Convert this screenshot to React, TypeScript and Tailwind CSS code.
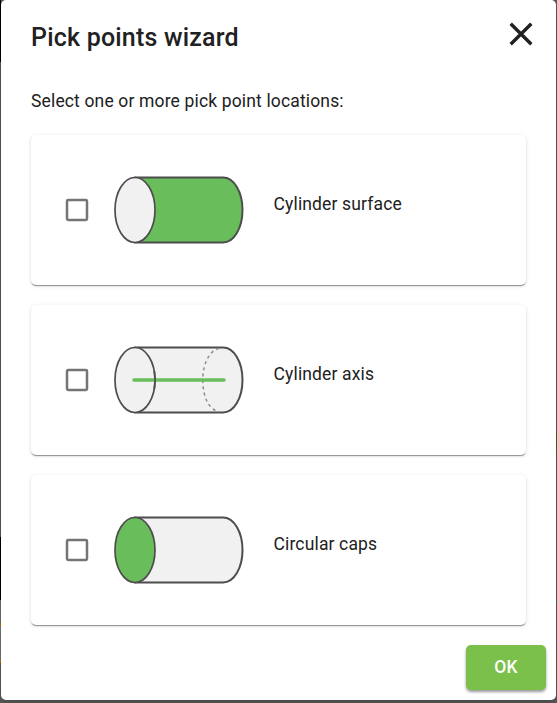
import { useState } from "react";

type Kind = "surface" | "axis" | "caps";

const GREEN = "#69be5b";
const GREY = "#f1f1f1";
const LINE = "#4d4d4d";

function Cylinder({ kind }: { kind: Kind }) {
  return (
    <svg width="132" height="70" viewBox="0 0 132 70" fill="none" className="shrink-0">
      <path
        d="M22 2.5H110C121 2.5 129.5 17 129.5 35S121 67.5 110 67.5H22Z"
        fill={kind === "surface" ? GREEN : GREY}
        stroke={LINE}
        strokeWidth="2"
      />
      <ellipse
        cx="22"
        cy="35"
        rx="20"
        ry="32.5"
        fill={kind === "caps" ? GREEN : GREY}
        stroke={LINE}
        strokeWidth="1.7"
      />
      {kind === "axis" && (
        <>
          <path d="M106 3.6C97 5 89.8 18 89.8 35S96 65 106 66.6" stroke="#8c8c8c" strokeWidth="1.5" strokeDasharray="3 3.3" />
          <path d="M21 35H111" stroke={GREEN} strokeWidth="3.6" strokeLinecap="round" />
          <path d="M41.3 26A20 32.5 0 0 1 41.3 44" stroke={LINE} strokeWidth="1.7" />
        </>
      )}
    </svg>
  );
}

function Option({ kind, label }: { kind: Kind; label: string }) {
  const [checked, setChecked] = useState(false);
  return (
    <label className="flex h-[150px] w-[495px] items-center rounded-[5px] bg-white pl-[34px] shadow-[0_2px_1px_-1px_rgba(0,0,0,0.28),0_1px_1px_0_rgba(0,0,0,0.16),0_1px_4px_0_rgba(0,0,0,0.12)]">
      <input type="checkbox" checked={checked} onChange={() => setChecked(!checked)} className="sr-only" />
      <svg width="24" height="24" viewBox="0 0 24 24" className="shrink-0">
        <rect
          x="2"
          y="2"
          width="20"
          height="20"
          rx="1.2"
          fill={checked ? "#7bc04b" : "none"}
          stroke="#757575"
          strokeWidth="2.5"
        />
      </svg>
      <span className="ml-[23.5px] flex">
        <Cylinder kind={kind} />
      </span>
      <span className="mb-3 ml-[29px] text-[17.5px] leading-6 tracking-[0.15px]">{label}</span>
    </label>
  );
}

export default function App() {
  return (
    <div className="flex h-[703px] w-[557px] overflow-hidden bg-[#5c5c5c] font-['Roboto','Liberation_Sans',sans-serif] text-[#212121]">
      <div className="flex w-px shrink-0 flex-col">
        <i className="h-[62px] bg-black" />
        <i className="h-[475px] bg-[#54565a]" />
        <i className="h-[63px] bg-black" />
        <i className="h-[23px] bg-[#707070]" />
        <i className="h-[3px] bg-[#b87500]" />
        <i className="h-[34px] bg-[#777777]" />
        <i className="h-[3px] bg-[#b87500]" />
      </div>
      <main className="flex h-[700px] w-[555px] shrink-0 flex-col rounded-[5px] bg-white shadow-[0_3px_8px_rgba(0,0,0,0.25)]">
        <header className="flex h-[75px] shrink-0 items-center justify-between pr-[23px] pl-[30px]">
          <h1 className="text-[25px] leading-8 font-medium tracking-[0.2px]">Pick points wizard</h1>
          <button aria-label="Close" className="mb-[7px]">
            <svg width="24" height="24" viewBox="0 0 24 24" fill="none" stroke="#212121" strokeWidth="3.4">
              <path d="M1.7 1.7L22.3 22.3M22.3 1.7L1.7 22.3" />
            </svg>
          </button>
        </header>
        <p className="mt-[14px] pl-[30px] text-[17.5px] leading-6 tracking-[0.15px]">Select one or more pick point locations:</p>
        <div className="mt-[22px] ml-[30px] flex flex-col gap-5">
          <Option kind="surface" label="Cylinder surface" />
          <Option kind="axis" label="Cylinder axis" />
          <Option kind="caps" label="Circular caps" />
        </div>
        <button className="mt-5 mr-[10px] h-[45px] w-20 self-end rounded-[5px] bg-[#7bc04b] text-[17.5px] font-medium tracking-[0.2px] text-white shadow-[0_2px_3px_rgba(0,0,0,0.4)]">
          OK
        </button>
      </main>
      <div className="flex w-px shrink-0 flex-col">
        <i className="h-[431px]" />
        <i className="h-[23px] bg-[#385b16]" />
        <i className="h-[146px]" />
        <i className="h-[2px] bg-[#126278]" />
      </div>
    </div>
  );
}
